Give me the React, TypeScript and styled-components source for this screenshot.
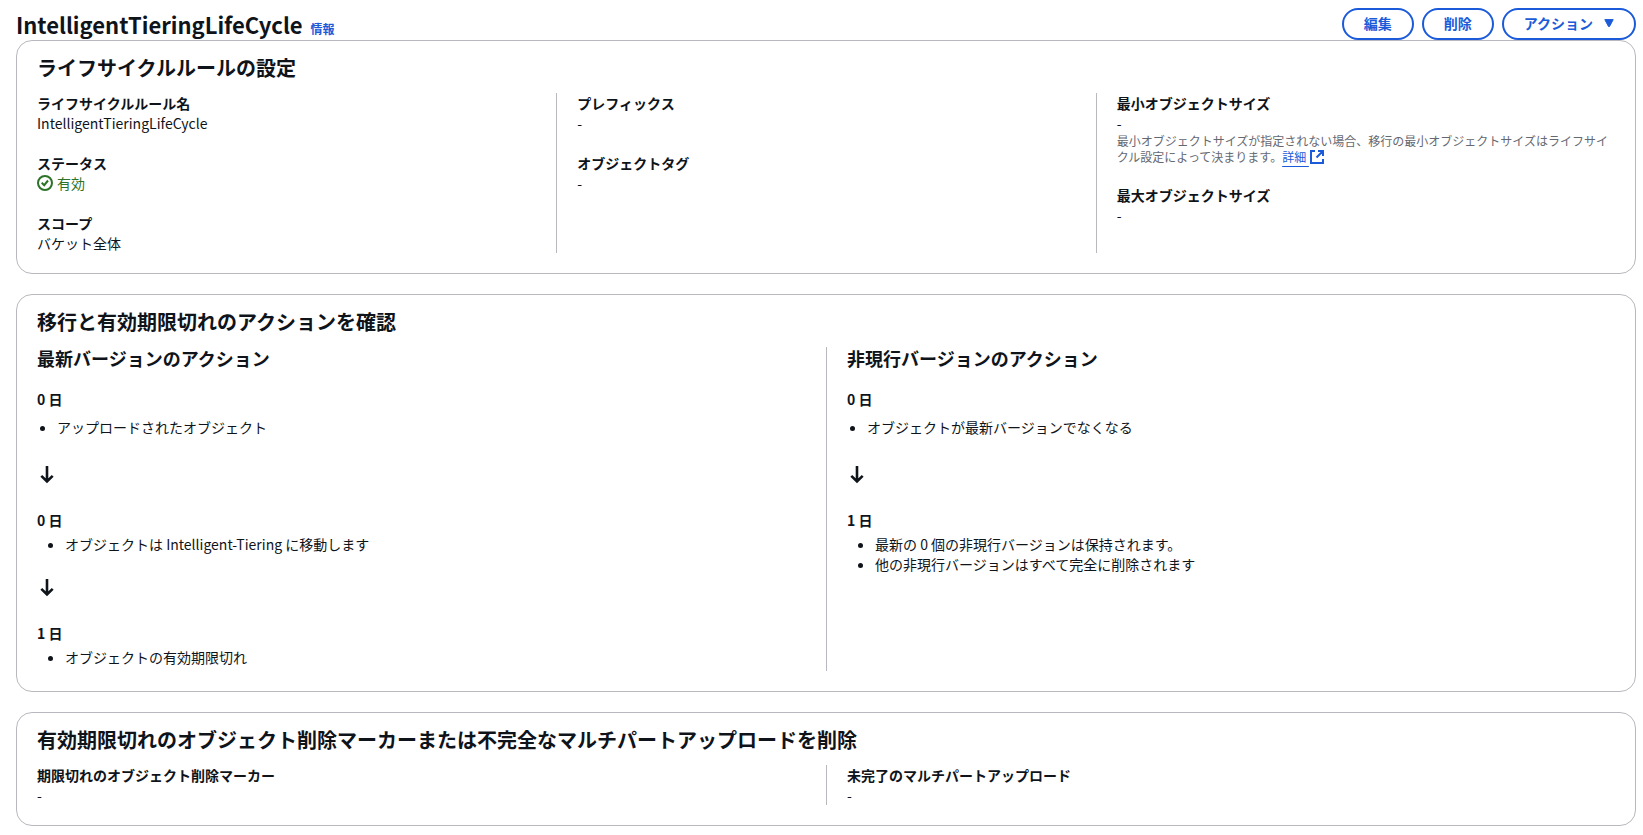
import React from "react";
import styled, { createGlobalStyle } from "styled-components";

const Global = createGlobalStyle`
  *, *::before, *::after { box-sizing: border-box; }
  body {
    margin: 0;
    background: #ffffff;
    color: #0f141a;
    font-family: "Noto Sans CJK JP", "Noto Sans", sans-serif;
    font-size: 14px;
    line-height: 20px;
  }
  h1, h2, h3, h4, dl, dt, dd, p, ul { margin: 0; padding: 0; }
`;

const Page = styled.main`
  padding: 8px 7px 8px 16px;
`;

const PageHeader = styled.header`
  display: flex;
  align-items: center;
  justify-content: space-between;
  min-height: 32px;
`;

const TitleGroup = styled.div`
  display: flex;
  align-items: baseline;
  gap: 8px;
`;

const PageTitle = styled.h1`
  font-size: 22px;
  line-height: 32px;
  font-weight: 700;
`;

const InfoLink = styled.a`
  color: #1b5bd9;
  font-size: 12px;
  line-height: 16px;
  font-weight: 700;
  text-decoration: none;
`;

const Actions = styled.div`
  display: flex;
  gap: 8px;
`;

const Button = styled.button`
  display: inline-flex;
  align-items: center;
  gap: 11px;
  height: 32px;
  padding: 0 20px 2px;
  border: 2px solid #1b5bd9;
  border-radius: 20px;
  background: #ffffff;
  color: #1b5bd9;
  font: inherit;
  font-weight: 700;
  white-space: nowrap;
  cursor: pointer;
`;

const Stack = styled.div`
  display: flex;
  flex-direction: column;
  gap: 20px;
`;

const Panel = styled.section`
  border: 1px solid #b8b8be;
  border-radius: 16px;
  background: #ffffff;
  padding-bottom: 20px;
`;

const PanelTitle = styled.h2`
  padding: 15px 20px 13px;
  font-size: 20px;
  line-height: 24px;
  font-weight: 700;
`;

const Columns = styled.div<{ $count: number }>`
  display: grid;
  grid-template-columns: repeat(${(p) => p.$count}, minmax(0, 1fr));
`;

const Column = styled.div`
  padding: 0 20px;
  & + & { border-left: 1px solid #b8b8be; }
`;

const Fields = styled.dl`
  display: flex;
  flex-direction: column;
  gap: 20px;
`;

const Label = styled.dt`
  font-weight: 700;
`;

const Value = styled.dd``;

const Help = styled.dd`
  color: #656871;
  font-size: 12px;
  line-height: 16px;
`;

const HelpLink = styled.a`
  color: #1b5bd9;
  text-decoration: underline;
  text-underline-offset: 4px;
  svg { vertical-align: -3px; }
`;

const Status = styled.span`
  display: flex;
  align-items: center;
  gap: 4px;
  color: #2b7326;
`;

const SubTitle = styled.h3`
  margin-bottom: 20px;
  font-size: 18px;
  line-height: 22px;
  font-weight: 700;
`;

const Day = styled.h4`
  font-size: 14px;
  font-weight: 700;
`;

const Bullets = styled.ul<{ $nested?: boolean }>`
  && {
    margin: ${(p) => (p.$nested ? 4 : 8)}px 0;
    padding-left: ${(p) => (p.$nested ? 28 : 20)}px;
  }
`;

const ArrowRow = styled.div`
  display: flex;
  padding: 20px 0 24px;
`;

const CaretIcon = () => (
  <svg width="10" height="10" viewBox="0 0 10 10" aria-hidden="true">
    <path d="M.8 1.600h8.400L5.500 8.500h-1z" fill="currentColor" stroke="currentColor" strokeLinejoin="round" />
  </svg>
);

const CheckIcon = () => (
  <svg width="16" height="16" viewBox="0 0 16 16" fill="none" stroke="currentColor" strokeWidth="2" aria-hidden="true">
    <circle cx="8" cy="8" r="7" />
    <path d="m4.700 7.800 2.500 2.400L11 5.500" />
  </svg>
);

const ExternalIcon = () => (
  <svg width="16" height="16" viewBox="0 0 16 16" fill="none" stroke="currentColor" strokeWidth="2" aria-hidden="true">
    <path d="M6 2H2v12h12v-4M9 2h5v5M14 2 7.500 8.500" />
  </svg>
);

const ArrowDown = () => (
  <svg width="20" height="21" viewBox="0 0 20 21" fill="none" stroke="currentColor" strokeWidth="2.600" aria-hidden="true">
    <path d="M10 1v16M4.300 10.800l5.700 5.700 5.700-5.700" />
  </svg>
);

const Field = ({ label, children, help }: { label: string; children: React.ReactNode; help?: React.ReactNode }) => (
  <div>
    <Label>{label}</Label>
    <Value>{children}</Value>
    {help && <Help>{help}</Help>}
  </div>
);

const Step = ({ day, items, nested }: { day: string; items: string[]; nested?: boolean }) => (
  <>
    <Day>{day}</Day>
    <Bullets $nested={nested}>
      {items.map((item) => (
        <li key={item}>{item}</li>
      ))}
    </Bullets>
  </>
);

const Arrow = () => (
  <ArrowRow>
    <ArrowDown />
  </ArrowRow>
);

export default function App() {
  return (
    <Page>
      <Global />
      <PageHeader>
        <TitleGroup>
          <PageTitle>IntelligentTieringLifeCycle</PageTitle>
          <InfoLink href="#info">情報</InfoLink>
        </TitleGroup>
        <Actions>
          <Button type="button">編集</Button>
          <Button type="button">削除</Button>
          <Button type="button" aria-haspopup="menu">
            アクション
            <CaretIcon />
          </Button>
        </Actions>
      </PageHeader>

      <Stack>
        <Panel>
          <PanelTitle>ライフサイクルルールの設定</PanelTitle>
          <Columns $count={3}>
            <Column>
              <Fields>
                <Field label="ライフサイクルルール名">IntelligentTieringLifeCycle</Field>
                <Field label="ステータス">
                  <Status>
                    <CheckIcon />
                    有効
                  </Status>
                </Field>
                <Field label="スコープ">バケット全体</Field>
              </Fields>
            </Column>
            <Column>
              <Fields>
                <Field label="プレフィックス">-</Field>
                <Field label="オブジェクトタグ">-</Field>
              </Fields>
            </Column>
            <Column>
              <Fields>
                <Field
                  label="最小オブジェクトサイズ"
                  help={
                    <>
                      最小オブジェクトサイズが指定されない場合、移行の最小オブジェクトサイズはライフサイクル設定によって決まります。
                      <HelpLink href="#details">
                        詳細 <ExternalIcon />
                      </HelpLink>
                    </>
                  }
                >
                  -
                </Field>
                <Field label="最大オブジェクトサイズ">-</Field>
              </Fields>
            </Column>
          </Columns>
        </Panel>

        <Panel>
          <PanelTitle>移行と有効期限切れのアクションを確認</PanelTitle>
          <Columns $count={2}>
            <Column>
              <SubTitle>最新バージョンのアクション</SubTitle>
              <Step day="0 日" items={["アップロードされたオブジェクト"]} />
              <Arrow />
              <Step day="0 日" items={["オブジェクトは Intelligent-Tiering に移動します"]} nested />
              <Arrow />
              <Step day="1 日" items={["オブジェクトの有効期限切れ"]} nested />
            </Column>
            <Column>
              <SubTitle>非現行バージョンのアクション</SubTitle>
              <Step day="0 日" items={["オブジェクトが最新バージョンでなくなる"]} />
              <Arrow />
              <Step
                day="1 日"
                items={["最新の 0 個の非現行バージョンは保持されます。", "他の非現行バージョンはすべて完全に削除されます"]}
                nested
              />
            </Column>
          </Columns>
        </Panel>

        <Panel>
          <PanelTitle>有効期限切れのオブジェクト削除マーカーまたは不完全なマルチパートアップロードを削除</PanelTitle>
          <Columns $count={2}>
            <Column>
              <Fields>
                <Field label="期限切れのオブジェクト削除マーカー">-</Field>
              </Fields>
            </Column>
            <Column>
              <Fields>
                <Field label="未完了のマルチパートアップロード">-</Field>
              </Fields>
            </Column>
          </Columns>
        </Panel>
      </Stack>
    </Page>
  );
}
